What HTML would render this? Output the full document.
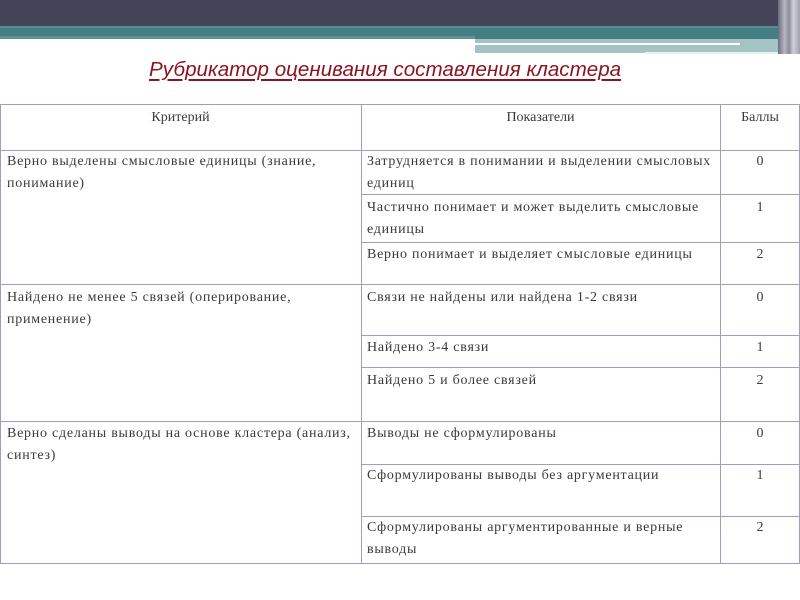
<!DOCTYPE html>
<html><head><meta charset="utf-8"><style>
*{margin:0;padding:0;box-sizing:border-box}
body{width:800px;height:600px;background:#fff;position:relative;overflow:hidden;font-family:"Liberation Serif","DejaVu Serif",serif;color:#3a3a3a}
.a{position:absolute}
.h{position:absolute;height:1px;background:#9d9dc4}
.v{position:absolute;width:1px;background:#9d9dc4}
.t{position:absolute;font-size:14px;line-height:22px;letter-spacing:0.75px;white-space:nowrap;margin-top:2px}
.c{text-align:center;letter-spacing:0}
</style></head><body>
<div class="a" style="left:0;top:0;width:800px;height:26px;background:#434457"></div>
<div class="a" style="left:0;top:26px;width:800px;height:2px;background:#5a8c90"></div>
<div class="a" style="left:0;top:28px;width:800px;height:11px;background:#447e82"></div>
<div class="a" style="left:0;top:36px;width:475px;height:3px;background:#5f9397"></div>
<div class="a" style="left:475px;top:39px;width:305px;height:14px;background:#a3c3c5"></div>
<div class="a" style="left:475px;top:43px;width:265px;height:2px;background:#fff"></div>
<div class="a" style="left:645px;top:52px;width:140px;height:2px;background:#e8f0f0"></div>
<div class="a" style="left:778px;top:0;width:22px;height:54px;background:linear-gradient(90deg,#6a6a80,#b8b8c4 30%,#8a8a9a 50%,#d0d0d8 70%,#a0a0b0)"></div>
<div class="a" style="left:149px;top:58px;font-family:'Liberation Sans',sans-serif;font-style:italic;font-size:20.6px;color:#8b1420;text-decoration:underline;text-underline-offset:3px;white-space:nowrap">Рубрикатор оценивания составления кластера</div>

<div class="h" style="left:0;top:104px;width:800px"></div>
<div class="h" style="left:0;top:150px;width:800px"></div>
<div class="h" style="left:361px;top:194px;width:439px"></div>
<div class="h" style="left:361px;top:242px;width:439px"></div>
<div class="h" style="left:0;top:284px;width:800px"></div>
<div class="h" style="left:361px;top:335px;width:439px"></div>
<div class="h" style="left:361px;top:367px;width:439px"></div>
<div class="h" style="left:0;top:421px;width:800px"></div>
<div class="h" style="left:361px;top:464px;width:439px"></div>
<div class="h" style="left:361px;top:516px;width:439px"></div>
<div class="h" style="left:0;top:563px;width:800px"></div>
<div class="v" style="left:0;top:104px;height:460px"></div>
<div class="v" style="left:361px;top:104px;height:460px"></div>
<div class="v" style="left:720px;top:104px;height:460px"></div>
<div class="v" style="left:799px;top:104px;height:460px"></div>

<div class="t c" style="left:0;width:361px;top:105px">Критерий</div>
<div class="t c" style="left:361px;width:359px;top:105px">Показатели</div>
<div class="t c" style="left:720px;width:80px;top:105px">Баллы</div>

<div class="t" style="left:7px;top:149px">Верно выделены смысловые единицы (знание,<br>понимание)</div>
<div class="t" style="left:367px;top:149px">Затрудняется в понимании и выделении смысловых<br>единиц</div>
<div class="t c" style="left:720px;width:80px;top:149px">0</div>
<div class="t" style="left:367px;top:195px">Частично понимает и может выделить смысловые<br>единицы</div>
<div class="t c" style="left:720px;width:80px;top:195px">1</div>
<div class="t" style="left:367px;top:242px">Верно понимает и выделяет смысловые единицы</div>
<div class="t c" style="left:720px;width:80px;top:242px">2</div>

<div class="t" style="left:7px;top:285px">Найдено не менее 5 связей (оперирование,<br>применение)</div>
<div class="t" style="left:367px;top:285px">Связи не найдены или найдена 1-2 связи</div>
<div class="t c" style="left:720px;width:80px;top:285px">0</div>
<div class="t" style="left:367px;top:335px">Найдено 3-4 связи</div>
<div class="t c" style="left:720px;width:80px;top:335px">1</div>
<div class="t" style="left:367px;top:368px">Найдено 5 и более связей</div>
<div class="t c" style="left:720px;width:80px;top:368px">2</div>

<div class="t" style="left:7px;top:421px">Верно сделаны выводы на основе кластера (анализ,<br>синтез)</div>
<div class="t" style="left:367px;top:421px">Выводы не сформулированы</div>
<div class="t c" style="left:720px;width:80px;top:421px">0</div>
<div class="t" style="left:367px;top:463px">Сформулированы выводы без аргументации</div>
<div class="t c" style="left:720px;width:80px;top:463px">1</div>
<div class="t" style="left:367px;top:515px">Сформулированы аргументированные и верные<br>выводы</div>
<div class="t c" style="left:720px;width:80px;top:515px">2</div>
</body></html>
